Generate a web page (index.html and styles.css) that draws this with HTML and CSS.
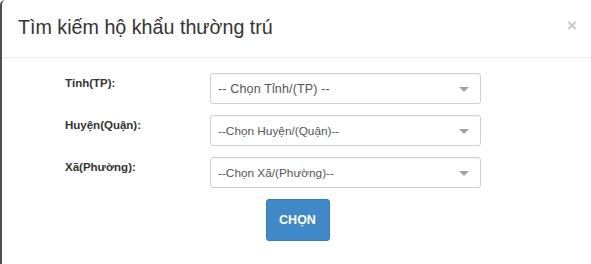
FILE: index.html
```html
<!DOCTYPE html>
<html lang="vi">
<head>
<meta charset="utf-8">
<title>Tìm kiếm hộ khẩu thường trú</title>
<link rel="stylesheet" href="styles.css">
</head>
<body>
<div class="modal">
  <div class="modal-header">
    <h4 class="modal-title">Tìm kiếm hộ khẩu thường trú</h4>
    <span class="close">×</span>
  </div>
  <div class="modal-body">
    <div class="row">
      <label class="label">Tỉnh(TP):</label>
      <div class="select"><span class="wide">-- Chọn Tỉnh/(TP) --</span><span class="caret"></span></div>
    </div>
    <div class="row">
      <label class="label">Huyện(Quận):</label>
      <div class="select"><span>--Chọn Huyện/(Quận)--</span><span class="caret"></span></div>
    </div>
    <div class="row">
      <label class="label">Xã(Phường):</label>
      <div class="select"><span>--Chọn Xã/(Phường)--</span><span class="caret"></span></div>
    </div>
    <div class="actions">
      <button class="btn">CHỌN</button>
    </div>
  </div>
</div>
</body>
</html>
```

FILE: styles.css
```css
html, body {
  margin: 0;
  padding: 0;
  background: #fff;
}
body {
  font-family: "Liberation Sans", Arial, sans-serif;
  color: #333;
  width: 591px;
  height: 264px;
  overflow: hidden;
}
.modal {
  height: 264px;
  border-left: 2px solid #4d4d4d;
  border-top-left-radius: 5px;
  box-sizing: border-box;
}
.modal-header {
  height: 57px;
  border-bottom: 1px solid #ececec;
  display: flex;
  align-items: center;
  justify-content: space-between;
  padding: 0 14px 0 16px;
}
.modal-title {
  margin: 0;
  font-size: 19.7px;
  font-weight: normal;
  color: #333;
  padding-bottom: 2px;
}
.close {
  font-size: 17px;
  font-weight: bold;
  color: #c8c8c8;
  line-height: 1;
  margin-top: -6px;
}
.modal-body {
  padding: 15px 0 0 0;
}
.row {
  display: flex;
  align-items: flex-start;
  margin-bottom: 11px;
}
.label {
  width: 145px;
  padding-left: 63px;
  padding-top: 4px;
  font-size: 11.5px;
  font-weight: bold;
  color: #333;
}
.select {
  width: 271px;
  height: 31px;
  box-sizing: border-box;
  border: 1px solid #cfcfcf;
  border-radius: 3px;
  display: flex;
  align-items: center;
  justify-content: space-between;
  padding: 0 11px 0 7px;
  font-size: 11.8px;
  color: #555;
  box-shadow: inset 0 1px 1px rgba(0,0,0,0.04);
}
.wide {
  font-size: 12.5px;
  letter-spacing: 0.15px;
}
.caret {
  width: 0;
  height: 0;
  border-left: 5.5px solid transparent;
  border-right: 5.5px solid transparent;
  border-top: 5px solid #a3a3a3;
  margin-top: 2px;
}
.actions {
  display: flex;
  justify-content: center;
  padding-left: 2px;
}
.btn {
  width: 64px;
  height: 42px;
  border: 1px solid #357ebd;
  border-radius: 3px;
  background: #3f89c9;
  color: #fff;
  font-family: "Liberation Sans", Arial, sans-serif;
  font-weight: bold;
  font-size: 12.5px;
}
```
